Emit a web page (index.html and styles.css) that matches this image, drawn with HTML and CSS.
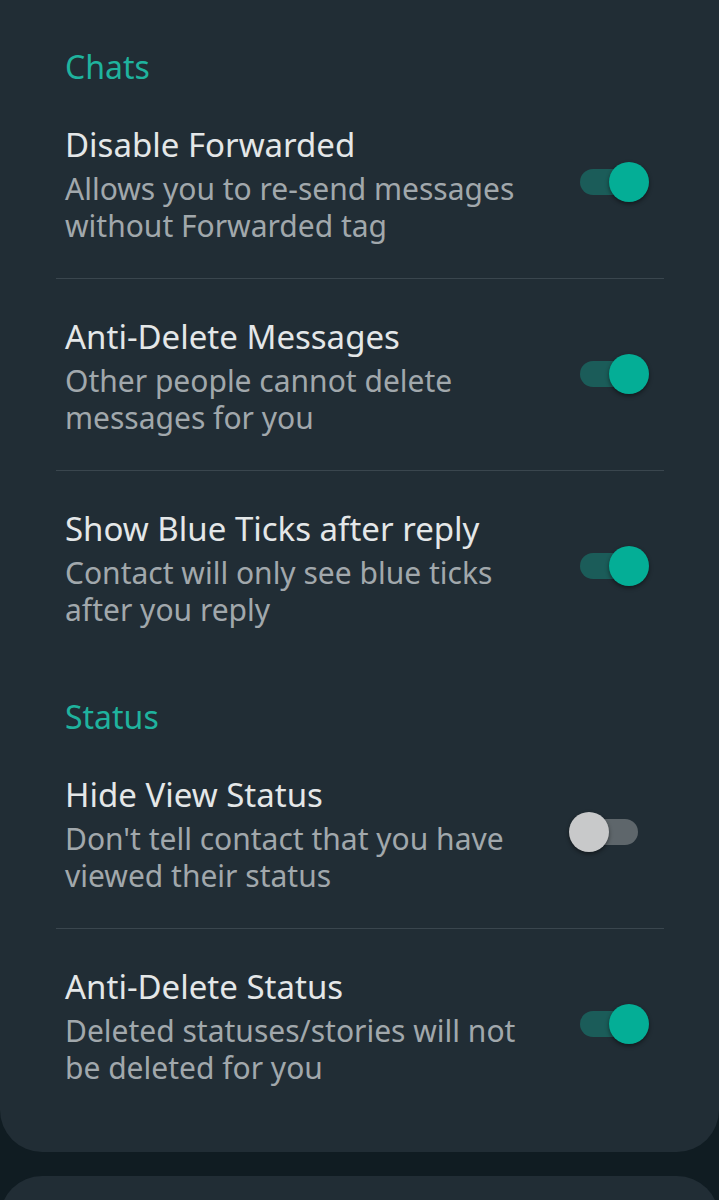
FILE: index.html
```html
<!DOCTYPE html>
<html lang="en">
<head>
<meta charset="utf-8">
<title>Settings</title>
<link rel="stylesheet" href="styles.css">
</head>
<body>
<div class="screen">
  <section class="card">
    <h2 class="section-title first">Chats</h2>
    <div class="row">
      <div class="text">
        <div class="title">Disable Forwarded</div>
        <div class="sub">Allows you to re-send messages<br>without Forwarded tag</div>
      </div>
      <div class="switch on"><span class="track"></span><span class="thumb"></span></div>
    </div>
    <div class="row">
      <div class="text">
        <div class="title">Anti-Delete Messages</div>
        <div class="sub">Other people cannot delete<br>messages for you</div>
      </div>
      <div class="switch on"><span class="track"></span><span class="thumb"></span></div>
    </div>
    <div class="row last">
      <div class="text">
        <div class="title">Show Blue Ticks after reply</div>
        <div class="sub">Contact will only see blue ticks<br>after you reply</div>
      </div>
      <div class="switch on"><span class="track"></span><span class="thumb"></span></div>
    </div>
    <h2 class="section-title">Status</h2>
    <div class="row">
      <div class="text">
        <div class="title">Hide View Status</div>
        <div class="sub">Don't tell contact that you have<br>viewed their status</div>
      </div>
      <div class="switch off"><span class="track"></span><span class="thumb"></span></div>
    </div>
    <div class="row last end">
      <div class="text">
        <div class="title">Anti-Delete Status</div>
        <div class="sub">Deleted statuses/stories will not<br>be deleted for you</div>
      </div>
      <div class="switch on"><span class="track"></span><span class="thumb"></span></div>
    </div>
  </section>
  <section class="card next"></section>
</div>
</body>
</html>
```
FILE: styles.css
```css
html, body {
  margin: 0;
  padding: 0;
  background: #101c22;
}
body {
  font-family: "Noto Sans", "Open Sans", sans-serif;
  width: 719px;
  height: 1200px;
  overflow: hidden;
}
.screen {
  display: flex;
  flex-direction: column;
  gap: 24px;
}
.card {
  background: #212d35;
  border-radius: 0 0 42px 42px;
  padding: 0 55px 0 56px;
}
.card.next {
  border-radius: 42px 42px 0 0;
  height: 80px;
}
.section-title {
  margin: 0;
  font-weight: 400;
  font-size: 32px;
  line-height: 40px;
  color: #1fb39e;
  padding: 35px 0 0 9px;
}
.section-title.first {
  padding-top: 47px;
}
.row {
  display: flex;
  align-items: center;
  justify-content: space-between;
  padding: 38px 15px 34px 9px;
  border-bottom: 1px solid #3a464e;
}
.row.last {
  border-bottom: none;
}
.row.end {
  padding-bottom: 66px;
}
.title {
  font-size: 33px;
  line-height: 40px;
  color: #e4e7e8;
  height: 45px;
}
.sub {
  font-size: 30px;
  line-height: 37px;
  color: #a1a8ac;
}
.switch {
  position: relative;
  width: 80px;
  height: 40px;
  flex: none;
  margin-bottom: 5px;
}
.track {
  position: absolute;
  left: 11px;
  top: 7px;
  width: 58px;
  height: 26px;
  border-radius: 13px;
}
.thumb {
  position: absolute;
  top: 0;
  width: 40px;
  height: 40px;
  border-radius: 50%;
  box-shadow: 0 2px 4px rgba(0, 0, 0, 0.45);
}
.on .track { background: #1b5c59; }
.on .thumb { right: 0; background: #04ae96; }
.off .track { background: #5e666b; }
.off .thumb { left: 0; background: #c8c9ca; }
```
